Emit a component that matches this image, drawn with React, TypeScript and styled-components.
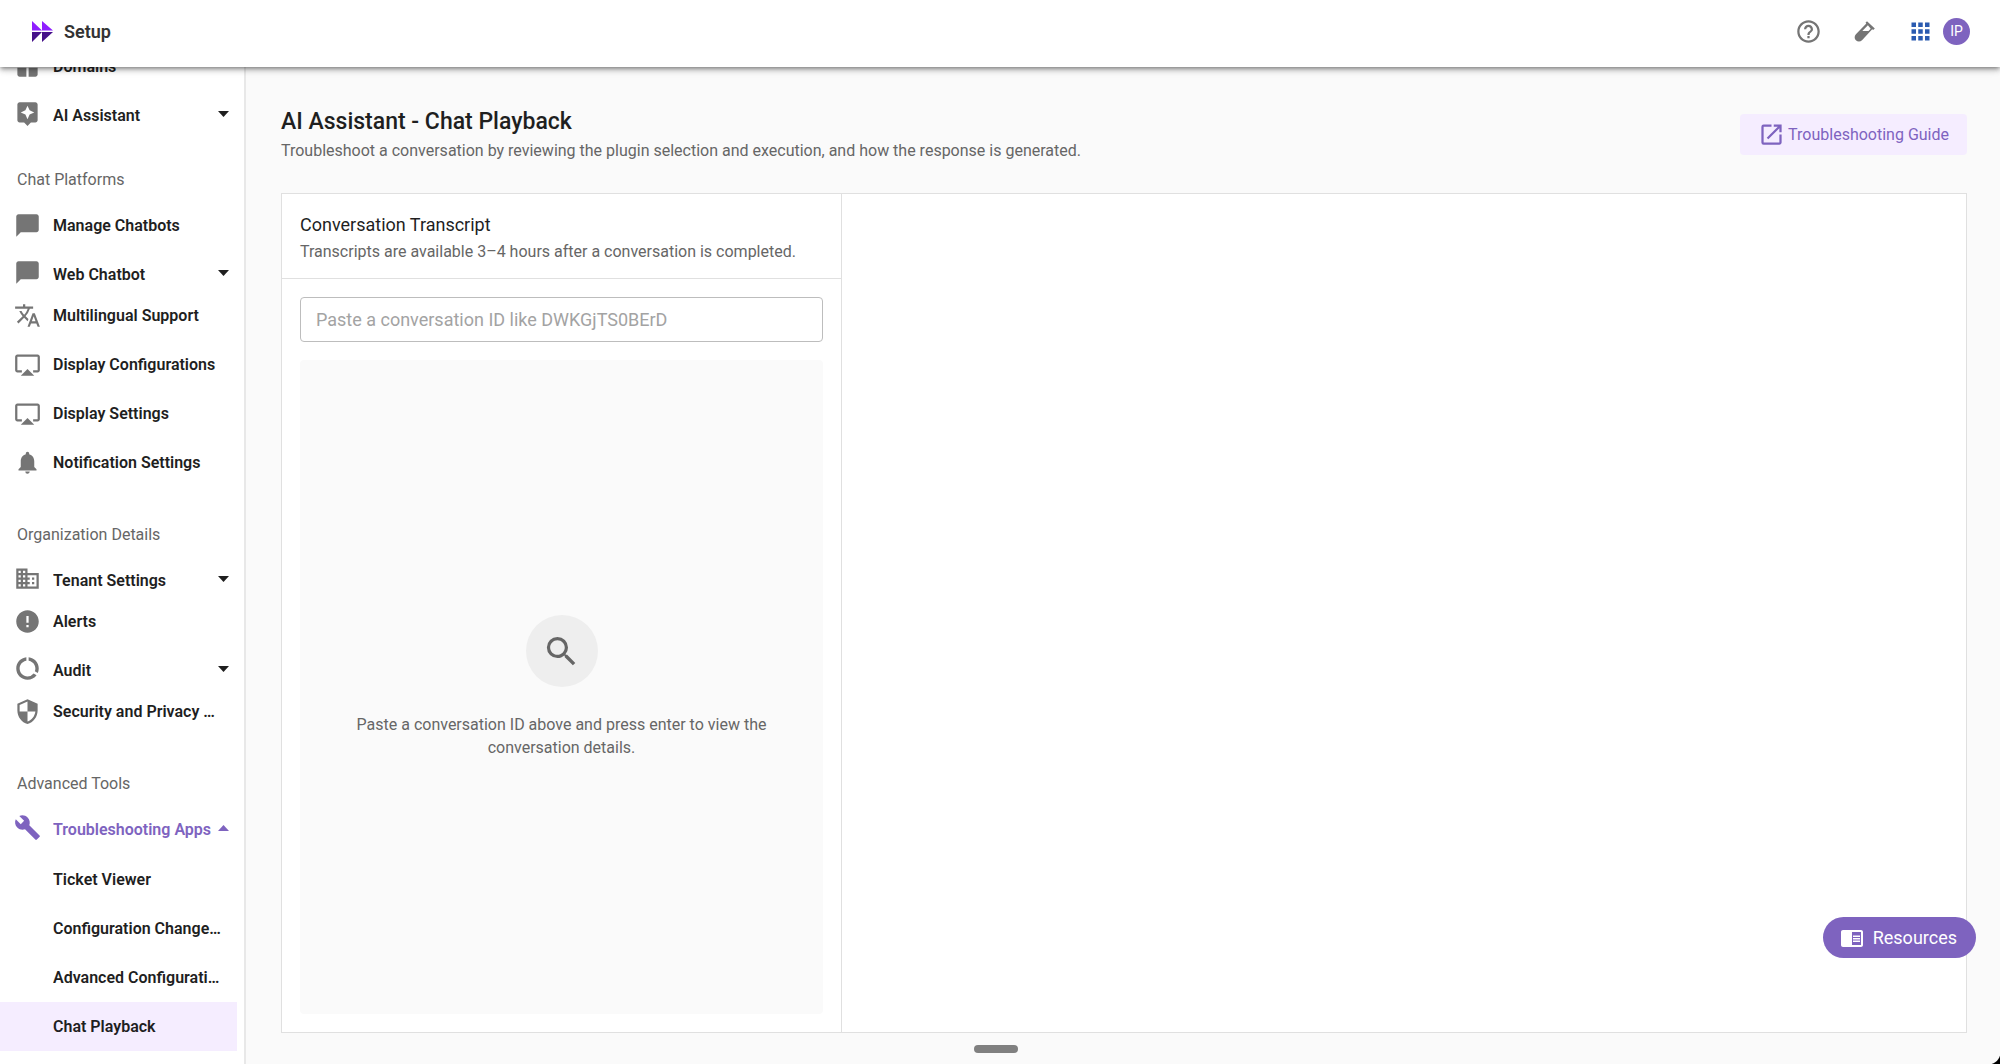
import React from "react";
import styled, { createGlobalStyle } from "styled-components";
import type { IconType } from "react-icons";
import {
  MdAirplay,
  MdApps,
  MdAssistant,
  MdBuild,
  MdChatBubble,
  MdChromeReaderMode,
  MdDataUsage,
  MdDomain,
  MdError,
  MdHelpOutline,
  MdNotifications,
  MdOpenInNew,
  MdSearch,
  MdSecurity,
  MdTranslate,
  MdWindow,
} from "react-icons/md";

const color = {
  purple: "#7e63bf",
  purpleTint: "#f5edff",
  text: "#1f1f1f",
  muted: "#666666",
  icon: "#757575",
  line: "#e0e0e0",
  page: "#fafafa",
};

const GlobalStyle = createGlobalStyle`
  *, *::before, *::after { box-sizing: border-box; }
  body {
    margin: 0;
    background: ${color.page};
    color: ${color.text};
    font-family: Roboto, "Liberation Sans", sans-serif;
  }
  h1, h2, h3, p, ul { margin: 0; padding: 0; }
  ul { list-style: none; }
  button, input { font: inherit; }
`;

const Shell = styled.div`
  display: flex;
  flex-direction: column;
  height: 100vh;
  overflow: hidden;
`;

const TopBar = styled.header`
  position: relative;
  z-index: 2;
  display: flex;
  flex: none;
  align-items: center;
  justify-content: space-between;
  height: 67px;
  padding: 0 30px 4px 32px;
  background: #fff;
  box-shadow: 0 2px 4px -1px rgba(0, 0, 0, 0.4), 0 4px 5px rgba(0, 0, 0, 0.14),
    0 1px 10px rgba(0, 0, 0, 0.12);
`;

const Brand = styled.a`
  display: flex;
  align-items: center;
  gap: 11px;
  color: #333;
  font-size: 18px;
  font-weight: 600;
  line-height: 24px;
  text-decoration: none;
`;

const Actions = styled.div`
  display: flex;
  align-items: center;
  gap: 29px;
`;

const Account = styled.div`
  display: flex;
  align-items: center;
  gap: 9px;
`;

const IconButton = styled.button<{ $color?: string }>`
  display: flex;
  padding: 0;
  border: 0;
  background: none;
  color: ${(p) => p.$color ?? color.icon};
  font-size: 27px;
  cursor: pointer;
`;

const Avatar = styled.button`
  width: 27px;
  height: 27px;
  padding: 0;
  border: 0;
  border-radius: 50%;
  background: ${color.purple};
  color: #fff;
  font-size: 14px;
  line-height: 27px;
  cursor: pointer;
`;

const Body = styled.div`
  display: flex;
  flex: 1;
  min-height: 0;
`;

const Sidebar = styled.nav`
  flex: none;
  width: 246px;
  padding-right: 7px;
  overflow: hidden;
  border-right: 2px solid #e8e8e8;
  background: #fff;
`;

/* The menu rests partly scrolled beneath the top bar. */
const Menu = styled.div`
  margin-top: -25px;
`;

const SectionTitle = styled.h3`
  padding: 38px 17px 11px;
  color: ${color.muted};
  font-size: 16px;
  font-weight: 400;
  line-height: 20px;
`;

const rowBase = `
  display: flex;
  align-items: center;
  width: 100%;
  border: 0;
  font-size: 16px;
  font-weight: 600;
  line-height: 20px;
  text-align: left;
  text-decoration: none;
  cursor: pointer;
`;

const RowLink = styled.a<{ $nested?: boolean; $current?: boolean }>`
  ${rowBase}
  gap: 12px;
  height: 49px;
  padding: 0 14px 0 ${(p) => (p.$nested ? 53 : 14)}px;
  background: ${(p) => (p.$current ? color.purpleTint : "transparent")};
  color: ${color.text};
`;

const RowToggle = styled.button<{ $open?: boolean }>`
  ${rowBase}
  height: 41px;
  padding: 4px 8px 0 14px;
  background: none;
  color: ${(p) => (p.$open ? color.purple : color.text)};
`;

const RowIcon = styled.span<{ $active?: boolean; $spaced?: boolean }>`
  display: flex;
  flex: none;
  margin-right: ${(p) => (p.$spaced ? 12 : 0)}px;
  color: ${(p) => (p.$active ? color.purple : color.icon)};
  font-size: 27px;
`;

const RowLabel = styled.span<{ $low?: boolean }>`
  flex: 1;
  min-width: 0;
  padding-top: ${(p) => (p.$low ? 4 : 0)}px;
  overflow: hidden;
  text-overflow: ellipsis;
  white-space: nowrap;
`;

const CaretIcon = styled.svg`
  flex: none;
  width: 11px;
  height: 6px;
`;

const SubMenu = styled.ul`
  && {
    padding-top: 9px;
  }
`;

const Main = styled.main`
  display: flex;
  flex: 1;
  flex-direction: column;
  min-width: 0;
  padding: 40px 33px 31px 35px;
`;

const PageHead = styled.div`
  display: flex;
  align-items: flex-start;
  justify-content: space-between;
  gap: 24px;
  padding-bottom: 31px;
`;

const Title = styled.h1`
  font-size: 23px;
  font-weight: 500;
  line-height: 30px;
`;

const Muted = styled.p`
  color: ${color.muted};
  font-size: 16px;
  line-height: 23px;
`;

const PageText = styled.div`
  display: flex;
  flex-direction: column;
  gap: 2px;
`;

const GuideLink = styled.a`
  display: flex;
  align-items: center;
  gap: 3px;
  height: 41px;
  margin-top: 7px;
  padding: 0 18px;
  border-radius: 4px;
  background: ${color.purpleTint};
  color: ${color.purple};
  font-size: 16px;
  line-height: 24px;
  text-decoration: none;

  svg {
    font-size: 27px;
  }
`;

const Panel = styled.section`
  display: flex;
  flex: 1;
  min-height: 0;
  border: 1px solid ${color.line};
  background: #fff;
`;

const Transcript = styled.div`
  display: flex;
  flex: none;
  flex-direction: column;
  width: 560px;
  border-right: 1px solid ${color.line};
`;

const Details = styled.div`
  flex: 1;
`;

const TranscriptHead = styled.div`
  display: flex;
  flex-direction: column;
  gap: 2px;
  padding: 18px 18px 15px;
  border-bottom: 1px solid ${color.line};
`;

const PanelTitle = styled.h2`
  font-size: 18px;
  font-weight: 400;
  line-height: 26px;
`;

const TranscriptBody = styled.div`
  display: flex;
  flex: 1;
  flex-direction: column;
  gap: 18px;
  padding: 18px;
`;

const IdInput = styled.input`
  width: 100%;
  height: 45px;
  padding: 0 15px;
  border: 1px solid #bdbdbd;
  border-radius: 4px;
  background: #fff;
  color: ${color.text};
  font-size: 18px;

  &::placeholder {
    color: #a3a3a3;
    opacity: 1;
  }
`;

const EmptyState = styled.div`
  display: flex;
  flex: 1;
  flex-direction: column;
  align-items: center;
  justify-content: center;
  gap: 26px;
  padding: 0 48px;
  border-radius: 4px;
  background: ${color.page};
  text-align: center;
`;

const Disc = styled.span`
  display: flex;
  align-items: center;
  justify-content: center;
  width: 72px;
  height: 72px;
  border-radius: 50%;
  background: #eeeeee;
  color: ${color.muted};
  font-size: 39px;
`;

const Resources = styled.button`
  position: fixed;
  right: 24px;
  bottom: 106px;
  z-index: 3;
  display: flex;
  align-items: center;
  gap: 9px;
  height: 41px;
  padding: 0 19px 0 17px;
  border: 0;
  border-radius: 21px;
  background: ${color.purple};
  color: #fff;
  font-size: 18px;
  cursor: pointer;

  svg {
    font-size: 24px;
  }
`;

const Handle = styled.span`
  position: fixed;
  bottom: 11px;
  left: 50%;
  width: 44px;
  height: 8px;
  margin-left: -26px;
  border-radius: 4px;
  background: #808080;
`;

const Corner = styled.span`
  position: fixed;
  right: 0;
  bottom: 0;
  width: 12px;
  height: 12px;
  background: radial-gradient(circle at 0 0, transparent 12px, #000 13px);
`;

const Logo = () => (
  <svg width="21" height="21" viewBox="0 0 21 21" aria-hidden="true">
    <path d="M0 0 10 9.5V0l11 9.5H0z" fill="#8f1fff" />
    <path d="M0 11h21L10 21V11L0 21z" fill="#45108a" />
  </svg>
);

const TestTube = () => (
  <svg width="27" height="27" viewBox="0 0 27 27" aria-hidden="true">
    <path
      fill="currentColor"
      fillRule="evenodd"
      d="m16 3.200 7.800 7.200-1.600 1.600-1-.7L11 22.300a4.300 4.300 0 0 1-6.100-6.100L15.300 5.600l-.8-.8zm.9 4-5.600 5.800h6.200l2.200-2.300z"
    />
  </svg>
);

const Caret = ({ up }: { up?: boolean }) => (
  <CaretIcon viewBox="0 0 11 6" aria-hidden="true">
    <path fill="currentColor" d={up ? "M0 6h11L5.500 0z" : "M0 0h11L5.500 6z"} />
  </CaretIcon>
);

type Item = { label: string; icon: IconType; menu?: boolean };

const sections: { title?: string; items: Item[] }[] = [
  {
    items: [
      { label: "Domains", icon: MdWindow },
      { label: "AI Assistant", icon: MdAssistant, menu: true },
    ],
  },
  {
    title: "Chat Platforms",
    items: [
      { label: "Manage Chatbots", icon: MdChatBubble },
      { label: "Web Chatbot", icon: MdChatBubble, menu: true },
      { label: "Multilingual Support", icon: MdTranslate },
      { label: "Display Configurations", icon: MdAirplay },
      { label: "Display Settings", icon: MdAirplay },
      { label: "Notification Settings", icon: MdNotifications },
    ],
  },
  {
    title: "Organization Details",
    items: [
      { label: "Tenant Settings", icon: MdDomain, menu: true },
      { label: "Alerts", icon: MdError },
      { label: "Audit", icon: MdDataUsage, menu: true },
      { label: "Security and Privacy Settings", icon: MdSecurity },
    ],
  },
];

const troubleshooting = [
  "Ticket Viewer",
  "Configuration Changelog",
  "Advanced Configuration",
  "Chat Playback",
];

function MenuRow({ label, icon: Icon, menu }: Item) {
  if (menu) {
    return (
      <li>
        <RowToggle type="button" aria-expanded={false}>
          <RowIcon $spaced>
            <Icon />
          </RowIcon>
          <RowLabel $low>{label}</RowLabel>
          <Caret />
        </RowToggle>
      </li>
    );
  }
  return (
    <li>
      <RowLink href="#">
        <RowIcon>
          <Icon />
        </RowIcon>
        <RowLabel>{label}</RowLabel>
      </RowLink>
    </li>
  );
}

export default function App() {
  return (
    <>
      <GlobalStyle />
      <Shell>
        <TopBar>
          <Brand href="#">
            <Logo />
            Setup
          </Brand>
          <Actions>
            <IconButton type="button" aria-label="Help">
              <MdHelpOutline />
            </IconButton>
            <IconButton type="button" aria-label="Labs">
              <TestTube />
            </IconButton>
            <Account>
              <IconButton type="button" aria-label="Apps" $color="#2b5bb0">
                <MdApps />
              </IconButton>
              <Avatar type="button">IP</Avatar>
            </Account>
          </Actions>
        </TopBar>
        <Body>
          <Sidebar aria-label="Setup">
            <Menu>
              {sections.map((section, i) => (
                <React.Fragment key={i}>
                  {section.title && <SectionTitle>{section.title}</SectionTitle>}
                  <ul>
                    {section.items.map((item) => (
                      <MenuRow key={item.label} {...item} />
                    ))}
                  </ul>
                </React.Fragment>
              ))}
              <SectionTitle>Advanced Tools</SectionTitle>
              <RowToggle type="button" aria-expanded $open>
                <RowIcon $active $spaced>
                  <MdBuild />
                </RowIcon>
                <RowLabel $low>Troubleshooting Apps</RowLabel>
                <Caret up />
              </RowToggle>
              <SubMenu>
                {troubleshooting.map((label) => (
                  <li key={label}>
                    <RowLink href="#" $nested $current={label === "Chat Playback"}>
                      <RowLabel>{label}</RowLabel>
                    </RowLink>
                  </li>
                ))}
              </SubMenu>
            </Menu>
          </Sidebar>
          <Main>
            <PageHead>
              <PageText>
                <Title>AI Assistant - Chat Playback</Title>
                <Muted>
                  Troubleshoot a conversation by reviewing the plugin selection and
                  execution, and how the response is generated.
                </Muted>
              </PageText>
              <GuideLink href="#">
                <MdOpenInNew />
                Troubleshooting Guide
              </GuideLink>
            </PageHead>
            <Panel>
              <Transcript>
                <TranscriptHead>
                  <PanelTitle>Conversation Transcript</PanelTitle>
                  <Muted>
                    Transcripts are available 3–4 hours after a conversation is
                    completed.
                  </Muted>
                </TranscriptHead>
                <TranscriptBody>
                  <IdInput
                    type="text"
                    aria-label="Conversation ID"
                    placeholder="Paste a conversation ID like DWKGjTS0BErD"
                  />
                  <EmptyState>
                    <Disc>
                      <MdSearch />
                    </Disc>
                    <Muted>
                      Paste a conversation ID above and press enter to view the
                      conversation details.
                    </Muted>
                  </EmptyState>
                </TranscriptBody>
              </Transcript>
              <Details />
            </Panel>
          </Main>
        </Body>
        <Resources type="button">
          <MdChromeReaderMode />
          Resources
        </Resources>
        <Handle />
        <Corner />
      </Shell>
    </>
  );
}
